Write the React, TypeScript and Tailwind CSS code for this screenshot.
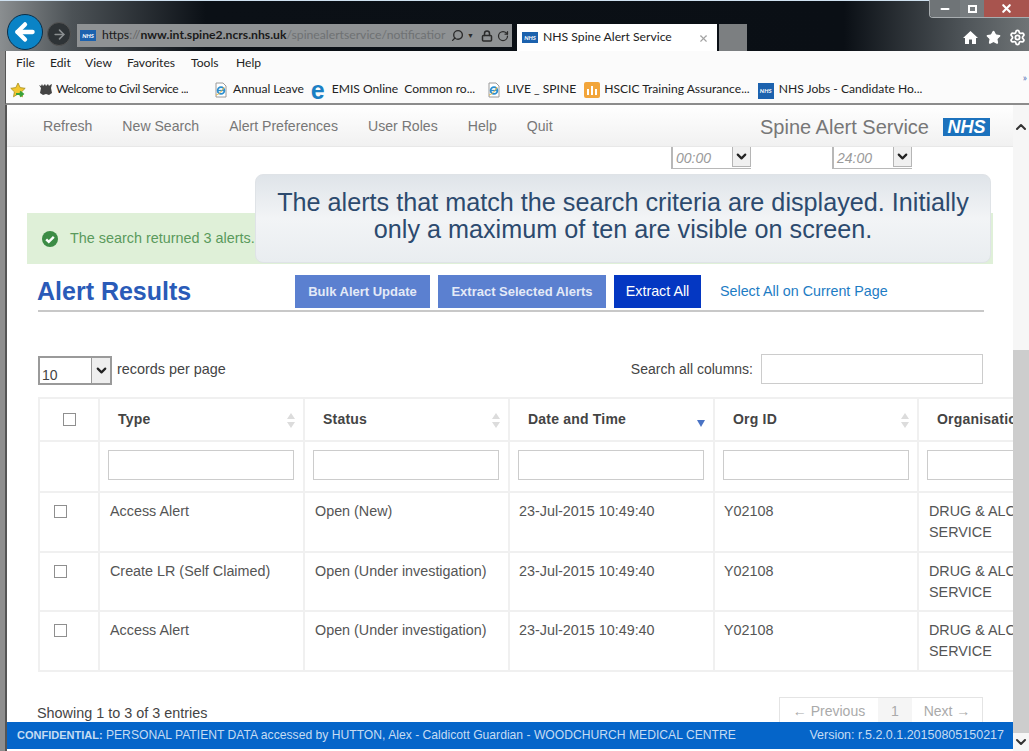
import React from "react";
import { ChevronUp, ChevronDown, Star, Settings, RotateCw, Lock, Search, ArrowLeft, ArrowRight, X, Minus } from "lucide-react";

const NhsMini = ({ w = 15, h = 11 }: { w?: number; h?: number }) => (
  <span className="inline-flex items-center justify-center bg-[#1c62ae] text-white font-bold italic text-[6px] leading-none shrink-0" style={{ width: w, height: h }}>NHS</span>
);

const IeIcon = () => (
  <svg width="16" height="16" viewBox="0 0 16 16" className="shrink-0">
    <path d="M3 1h7l3 3v11H3z" fill="#fff" stroke="#9a9a9a" />
    <circle cx="8" cy="8.5" r="3.4" fill="none" stroke="#2c8fd0" strokeWidth="1.8" />
    <path d="M4.6 8.5h6.8" stroke="#2c8fd0" strokeWidth="1.3" />
    <path d="M3 13c2-.5 5-2 8-8" stroke="#e8b53c" fill="none" />
  </svg>
);

const Sort = ({ active }: { active?: boolean }) =>
  active ? (
    <svg width="8" height="7" viewBox="0 0 8 7" className="absolute right-[8px] bottom-[13px]"><path d="M0 0h8L4 7z" fill="#4a73c4" /></svg>
  ) : (
    <svg width="8" height="15" viewBox="0 0 8 15" className="absolute right-[8px] top-[14px]"><path d="M4 0l4 6H0zM0 9h8l-4 6z" fill="#dcdcdc" /></svg>
  );

const Box = () => <span className="block w-[13px] h-[13px] border border-[#8f8f8f] bg-white" />;

const TimeSelect = ({ v }: { v: string }) => (
  <div className="flex items-end w-[80px] h-[22px] border-l-2 border-b border-[#b8b8b8] ">
    <span className="flex-1 pl-[3px] text-[14px] italic leading-[20px] text-[#9a9a9a]">{v}</span>
    <span className="w-[19px] h-[21px] mb-[1px] border border-[#b5b5b5] bg-[#f0f0f0] flex items-center justify-center"><ChevronDown size={15} strokeWidth={3.5} color="#222" /></span>
  </div>
);

const rows = [
  ["Access Alert", "Open (New)"],
  ["Create LR (Self Claimed)", "Open (Under investigation)"],
  ["Access Alert", "Open (Under investigation)"],
];
const cols = "grid grid-cols-[60px_205px_205px_205px_204px_110px]";
const cell = "border-r-2 border-b-2 border-[#f0f0f0]";
const body = "h-[59.7px] pt-[8px] text-[14.35px] leading-[21px] text-[#555] whitespace-nowrap";

export default function App() {
  return (
    <div className="relative w-[1029px] h-[751px] overflow-hidden bg-[#8e8e8e] flex flex-col font-['Liberation_Sans',sans-serif] text-[#444]">
      {/* Browser title bar */}
      <div className="h-[51px] shrink-0 relative bg-[linear-gradient(90deg,#8a8e90_0%,#4c5256_7%,#0b1016_20%,#0a0f15_82%,#50565a_94%,#6f7476_100%)] flex items-end pl-[7px] font-['Lato',sans-serif]">
        <div className="absolute left-0 right-0 top-0 h-px bg-[#cfe1f0]" />
        <span className="mb-[1px] w-[36px] h-[36px] rounded-full bg-[#0a83c6] border border-[#0b2e48] flex items-center justify-center shrink-0">
          <ArrowLeft size={26} strokeWidth={4} color="#fff" />
        </span>
        <span className="ml-[4px] mb-[5px] w-[24px] h-[24px] rounded-full bg-[#2e3336] border border-[#555] flex items-center justify-center shrink-0">
          <ArrowRight size={15} strokeWidth={2.5} color="#8b8f91" />
        </span>
        <div className="ml-[6px] mb-[4px] w-[435px] h-[23px] bg-[#8f9294] flex items-center pl-[3px] text-[12.2px] leading-none shrink-0">
          <NhsMini w={16} h={11} />
          <span className="ml-[6px] whitespace-nowrap text-[#1a1a1a]">https<span className="text-[#666]">://</span><span className="font-bold">nww.int.spine2.ncrs.nhs.uk</span><span className="text-[#6e7173]">/spinealertservice/notificatior</span></span>
          <span className="ml-auto pr-[3px] flex items-center gap-[3px] shrink-0 text-[#2b2b2b]">
            <Search size={13} strokeWidth={2.5} className="-scale-x-100" />
            <span className="text-[7px]">▼</span>
            <Lock size={12} strokeWidth={3} className="ml-[4px]" />
            <RotateCw size={12} strokeWidth={2.5} className="ml-[1px]" />
          </span>
        </div>
        <div className="ml-[5px] w-[200px] h-[27px] bg-white flex items-center pl-[5px] text-[12.2px] text-[#222] shrink-0 relative">
          <NhsMini w={16} h={11} />
          <span className="ml-[5px] whitespace-nowrap">NHS Spine Alert Service</span>
          <X size={11} strokeWidth={2.5} color="#a3a3a3" className="absolute right-[8px] top-[9px]" />
        </div>
        <div className="ml-[2px] w-[28px] h-[27px] bg-[#7c7f81] shrink-0" />
        <div className="absolute right-0 top-0 h-[18px] w-[100px] flex rounded-bl-[4px] border-l border-b border-[#a8adb0] overflow-hidden">
          <span className="w-[30px] bg-[#6f7477] flex items-center justify-center"><Minus size={12} strokeWidth={4} color="#fff" /></span>
          <span className="w-[24px] bg-[#777c7f] flex items-center justify-center"><span className="block w-[9px] h-[8px] border-2 border-white" /></span>
          <span className="flex-1 bg-[#a8544e] flex items-center justify-center"><X size={13} strokeWidth={4} color="#fff" /></span>
        </div>
        <div className="absolute right-[3px] top-[29px] flex items-center gap-[8px]">
          <svg width="15" height="15" viewBox="0 0 15 15"><path d="M7.5 1L15 8h-2v6H9V9.5H6V14H2V8H0z" fill="#fff" /></svg>
          <Star size={15} color="#fff" fill="#fff" />
          <Settings size={17} strokeWidth={2.5} color="#fff" />
        </div>
      </div>

      {/* Menu and favourites */}
      <div className="shrink-0 h-[54px] bg-[#fbfbfb] border-b-2 border-[#8c8c8c] font-['Lato',sans-serif] text-[12.1px] text-[#222] ml-[5px] border-l border-l-[#555] flex flex-col relative">
        <div className="h-[25px] flex items-center pl-[10px]">
          <span className="w-[34px]">File</span><span className="w-[35px]">Edit</span><span className="w-[42px]">View</span><span className="w-[64px]">Favorites</span><span className="w-[45px]">Tools</span><span>Help</span>
        </div>
        <div className="h-[27px] flex items-center pl-[4px] whitespace-nowrap">
          <svg width="17" height="16" viewBox="0 0 17 16" className="shrink-0">
            <path d="M8 1l2.2 4.6 5 .7-3.6 3.5.9 5L8 12l-4.5 2.8.9-5L.8 6.3l5-.7z" fill="#f2c62f" stroke="#a58f20" strokeWidth=".8" />
            <path d="M6 12h7M10 9.5l3 2.5-3 2.5" stroke="#3aa23a" strokeWidth="1.8" fill="none" />
          </svg>
          <svg width="15" height="13" viewBox="0 0 15 13" className="ml-[11px] mr-[3px] shrink-0">
            <path d="M1 2l2 1 1-2 1 2 2-2 1 2 2-2 1 2 1-1 2-1-1 4 1 5-3 2-3-1-3 1-3-2 1-5z" fill="#444" />
          </svg>
          <span className="w-[132px] tracking-[-0.4px] overflow-hidden">Welcome to Civil Service ...</span>
          <span className="ml-[25px] mr-[4px] shrink-0"><IeIcon /></span>
          <span>Annual Leave</span>
          <span className="ml-[7px] mr-[7px] text-[25px] leading-[16px] font-bold text-[#1b80c4] font-['Liberation_Sans',sans-serif]">e</span>
          <span>EMIS Online</span>
          <span className="ml-[6px]">Common ro...</span>
          <span className="ml-[11px] mr-[4px] shrink-0"><IeIcon /></span>
          <span>LIVE _ SPINE</span>
          <span className="ml-[8px] mr-[4px] w-[16px] h-[16px] rounded-[2px] bg-[#f2a53a] shrink-0 flex items-end justify-center gap-[2px] pb-[3px]">
            <span className="block w-[2px] h-[6px] bg-white" /><span className="block w-[2px] h-[9px] bg-white" /><span className="block w-[2px] h-[6px] bg-white" />
          </span>
          <span>HSCIC Training Assurance...</span>
          <span className="ml-[8px] mr-[5px]"><NhsMini w={16} h={16} /></span>
          <span>NHS Jobs - Candidate Ho...</span>
        </div>
        <span className="absolute right-[2px] top-[19px] text-[10px] text-[#4f6fb5]">»</span>
      </div>

      {/* Viewport */}
      <div className="flex-1 min-h-0 flex ml-[5px] border-l-2 border-[#555] bg-white">
        <div className="flex-1 min-w-0 flex flex-col">
          {/* App nav */}
          <div className="h-[42px] shrink-0 bg-[linear-gradient(#ffffff,#f1f1f1)] border-b border-[#e8e8e8] flex items-center pt-[2px] pl-[36px] pr-[23px] text-[14.1px] text-[#777]">
            <span>Refresh</span>
            <span className="ml-[30px]">New Search</span>
            <span className="ml-[30px]">Alert Preferences</span>
            <span className="ml-[30px]">User Roles</span>
            <span className="ml-[30px]">Help</span>
            <span className="ml-[30px]">Quit</span>
            <span className="ml-auto text-[20px] text-[#777]">Spine Alert Service</span>
            <span className="ml-[14px] w-[47px] h-[18px] bg-[#1c72bd] text-white font-bold italic text-[18px] leading-[18px] text-center">NHS</span>
          </div>

          {/* Content */}
          <div className="flex-1 min-h-0 overflow-hidden">
            <div className="h-[26px] flex items-start pl-[664px] gap-[81px]">
              <TimeSelect v="00:00" />
              <TimeSelect v="24:00" />
            </div>
            <div className="mt-[40px] ml-[20px] w-[966px] h-[51px] bg-[#dff0d8] flex items-center pl-[15px] text-[14.4px] text-[#5a9a5c]">
              <svg width="16" height="16" viewBox="0 0 16 16"><circle cx="8" cy="8" r="8" fill="#3c8c45" /><path d="M4.2 8.3l2.6 2.6 5-5" stroke="#fff" strokeWidth="2.4" fill="none" /></svg>
              <span className="ml-[12px]">The search returned 3 alerts.</span>
            </div>
            <div className="mt-[11px] ml-[31px] w-[946px] h-[37px] border-b-2 border-[#c8c8c8] flex items-start">
              <h1 className="-ml-px w-[258px] text-[25px] leading-[32px] font-bold text-[#2a5bb8]">Alert Results</h1>
              <button className="w-[135px] h-[33px] bg-[#5b80d0] text-[#e4eaf7] text-[13px] font-bold">Bulk Alert Update</button>
              <button className="ml-[8px] w-[168px] h-[33px] bg-[#5b80d0] text-[#e4eaf7] text-[13px] font-bold">Extract Selected Alerts</button>
              <button className="ml-[8px] w-[87px] h-[33px] bg-[#0437c2] text-white text-[14.3px]">Extract All</button>
              <span className="ml-[19px] text-[14.3px] leading-[33px] text-[#1d7cc4]">Select All on Current Page</span>
            </div>
            <div className="mt-[42px] ml-[31px] w-[945px] h-[33px] flex items-start">
              <div className="mt-[2px] w-[74px] h-[29px] border-2 border-[#9a9a9a] flex items-end shrink-0">
                <span className="flex-1 pl-[2px] text-[14px] leading-[16px]">10</span>
                <span className="w-[19px] h-[25px] self-start border-l border-[#999] bg-[#eee] flex items-center justify-center"><ChevronDown size={15} strokeWidth={3.5} color="#222" /></span>
              </div>
              <span className="ml-[5px] text-[14.4px] leading-[30px]">records per page</span>
              <span className="ml-auto text-[14px] leading-[30px]">Search all columns:</span>
              <span className="ml-[8px] w-[222px] h-[30px] border border-[#ccc] block" />
            </div>

            {/* Table */}
            <div className={`mt-[10px] ml-[31px] w-[976px] overflow-hidden ${cols} border-t-2 border-l-2 border-[#f0f0f0]`}>
              <div className={`${cell} h-[43px] flex items-center justify-center`}><Box /></div>
              {["Type", "Status", "Date and Time", "Org ID", "Organisation"].map((h, i) => (
                <div key={h} className={`${cell} h-[43px] relative pl-[18px] text-[14px] leading-[40px] tracking-[0.2px] font-bold whitespace-nowrap overflow-hidden text-[#444]`}>
                  {h}
                  {i < 4 && <Sort active={i === 2} />}
                </div>
              ))}
              <div className={`${cell} h-[51px]`} />
              {[0, 1, 2, 3, 4].map((i) => (
                <div key={i} className={`${cell} h-[51px] pl-[8px] pt-[8px]`}>
                  <span className="block w-[186px] h-[30px] border border-[#ccc]" />
                </div>
              ))}
              {rows.map((r, i) => (
                <React.Fragment key={i}>
                  <div className={`${cell} h-[59.7px] pt-[12px] pl-[14px]`}><Box /></div>
                  <div className={`${cell} ${body} pl-[10px]`}>{r[0]}</div>
                  <div className={`${cell} ${body} pl-[10px]`}>{r[1]}</div>
                  <div className={`${cell} ${body} pl-[9px]`}>23-Jul-2015 10:49:40</div>
                  <div className={`${cell} ${body} pl-[9px]`}>Y02108</div>
                  <div className={`${cell} ${body} pl-[10px] overflow-hidden`}>DRUG &amp; ALCOHOL<br />SERVICE</div>
                </React.Fragment>
              ))}
            </div>

            <div className="mt-[25px] ml-[30px] w-[946px] flex items-start justify-between text-[14.4px]">
              <span className="mt-[6px] leading-[20px]">Showing 1 to 3 of 3 entries</span>
              <div className="flex h-[30px] border border-[#e4e4e4] text-[#aaa] text-[14px] leading-[26px]">
                <span className="w-[98px] text-center">← Previous</span>
                <span className="w-[34px] text-center bg-[#f5f5f5]">1</span>
                <span className="w-[70px] text-center">Next →</span>
              </div>
            </div>
          </div>
        </div>

        {/* Scrollbar */}
        <div className="w-[16px] shrink-0 bg-[#f6f6f6] flex flex-col items-center">
          <ChevronUp size={16} strokeWidth={3} color="#333" className="mt-[14px]" />
          <div className="mt-[215px] w-full flex-1 bg-[#cdcdcd]" />
          <ChevronDown size={16} strokeWidth={3} color="#333" className="my-[1px]" />
        </div>
      </div>

      {/* Confidential footer */}
      <div className="absolute left-[7px] right-[16px] top-[722px] h-[27px] bg-[#0565c9] flex items-center justify-between pl-[10px] pr-[9px] text-[12.15px] text-[#c6dcf3] whitespace-nowrap">
        <span><b className="text-[11px]">CONFIDENTIAL:</b> PERSONAL PATIENT DATA accessed by HUTTON, Alex - Caldicott Guardian - WOODCHURCH MEDICAL CENTRE</span>
        <span className="text-[12.5px]">Version: r.5.2.0.1.20150805150217</span>
      </div>

      {/* Tooltip */}
      <div className="absolute left-[255px] top-[174px] w-[736px] h-[89px] rounded-[8px] border border-[#dfe3e7] bg-[linear-gradient(#dfe4e9,#f2f4f6_50%,#e9edf0)] flex items-center justify-center pb-[5px] text-center text-[25.2px] leading-[27px] text-[#2c4a6e]">
        <p className="w-[710px]">The alerts that match the search criteria are displayed. Initially only a maximum of ten are visible on screen.</p>
      </div>
    </div>
  );
}
